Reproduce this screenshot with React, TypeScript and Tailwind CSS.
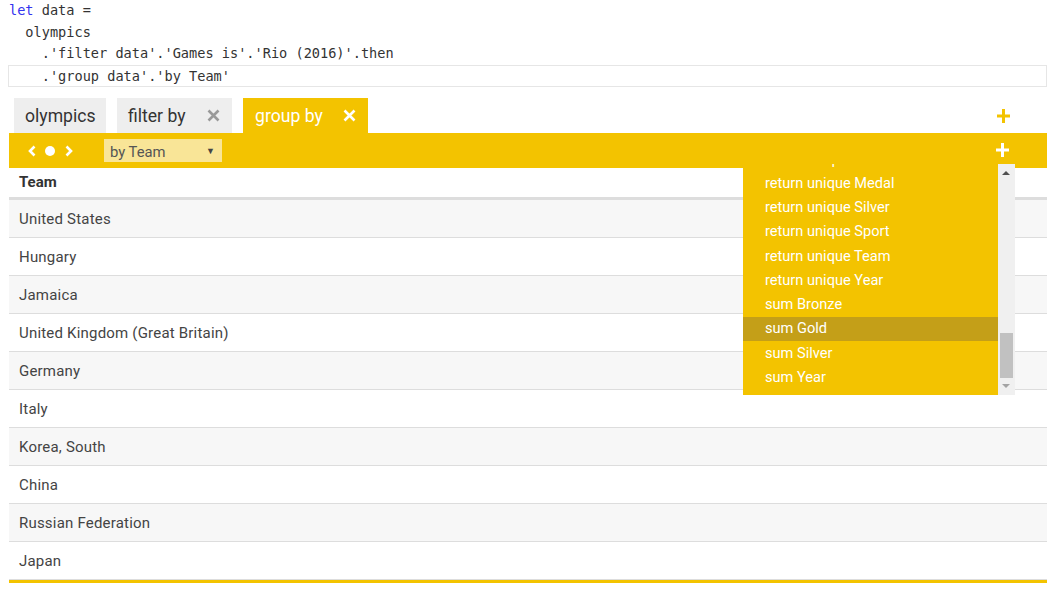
import React from "react";

const rows = [
  "United States",
  "Hungary",
  "Jamaica",
  "United Kingdom (Great Britain)",
  "Germany",
  "Italy",
  "Korea, South",
  "China",
  "Russian Federation",
  "Japan",
];

const items = [
  "return unique Gold",
  "return unique Medal",
  "return unique Silver",
  "return unique Sport",
  "return unique Team",
  "return unique Year",
  "sum Bronze",
  "sum Gold",
  "sum Silver",
  "sum Year",
];

function Plus({ color }: { color: string }) {
  return (
    <svg width="13" height="14" viewBox="0 0 13 14">
      <rect x="5" y="0" width="3" height="14" fill={color} />
      <rect x="0" y="5.5" width="13" height="3" fill={color} />
    </svg>
  );
}

function Cross({ color }: { color: string }) {
  return (
    <svg width="13" height="13" viewBox="0 0 13 13">
      <path d="M1.5 1.5 L11.5 11.5 M11.5 1.5 L1.5 11.5" stroke={color} strokeWidth="2.6" />
    </svg>
  );
}

export default function App() {
  return (
    <div className="relative w-[1047px] h-[607px] bg-white overflow-hidden font-['Roboto',sans-serif]">
      {/* code */}
      <div className="pl-[9px] font-['DejaVu_Sans_Mono',monospace] text-[13.6px] text-[#333] leading-[21.6px]">
        <div className="h-[21.6px] whitespace-pre">
          <span className="text-[#3333ee]">let</span> data =
        </div>
        <div className="h-[21.6px] whitespace-pre">{"  olympics"}</div>
        <div className="h-[21.6px] whitespace-pre">{"    .'filter data'.'Games is'.'Rio (2016)'.then"}</div>
        <div className="h-[22px] whitespace-pre border border-[#e6e6e6] ml-[-1px] leading-[20px]">{"    .'group data'.'by Team'"}</div>
      </div>

      {/* tabs */}
      <div className="mt-[11px] flex items-stretch h-[35px] pl-[14px] pr-[37px]">
        <div className="bg-[#eeeeee] w-[92px] pl-[11px] pt-[1px] flex items-center text-[17.6px] text-[#333]">olympics</div>
        <div className="ml-[11px] bg-[#eeeeee] w-[115px] pl-[11px] pr-[12px] pt-[1px] flex items-center justify-between text-[17.6px] text-[#333]">
          <span>filter by</span>
          <Cross color="#999999" />
        </div>
        <div className="ml-[11px] bg-[#f3c300] w-[125px] pl-[12px] pr-[12px] pt-[1px] flex items-center justify-between text-[17.6px] text-white">
          <span>group by</span>
          <Cross color="#ffffff" />
        </div>
        <div className="flex-1" />
        <div className="flex items-center pt-[1px]">
          <Plus color="#f3c300" />
        </div>
      </div>

      {/* yellow bar */}
      <div className="ml-[9px] h-[35px] bg-[#f3c300] flex items-center pr-[38px]">
        <div className="flex items-center ml-[19px] pt-[2px]">
          <svg width="8" height="12" viewBox="0 0 8 12">
            <path d="M6.5 1.5 L2 6 L6.5 10.5" stroke="white" strokeWidth="2.6" fill="none" />
          </svg>
          <div className="ml-[9px] w-[10px] h-[10px] rounded-full bg-white" />
          <svg className="ml-[10px]" width="8" height="12" viewBox="0 0 8 12">
            <path d="M1.5 1.5 L6 6 L1.5 10.5" stroke="white" strokeWidth="2.6" fill="none" />
          </svg>
        </div>
        <div className="ml-[31px] mt-[1px] w-[118px] h-[23px] bg-[#f9e597] flex items-center justify-between pl-[6px] pr-[7px] pt-[2px] text-[14.8px] text-[#555]">
          <span>by Team</span>
          <span className="text-[9px] text-[#444]">▼</span>
        </div>
        <div className="flex-1" />
        <Plus color="#ffffff" />
      </div>

      {/* table */}
      <div className="ml-[9px]">
        <div className="h-[32px] flex items-center pl-[10px] text-[15px] font-bold text-[#333] border-b-[3px] border-[#dddddd]">
          Team
        </div>
        {rows.map((r, i) => (
          <div
            key={r}
            className={`h-[38px] flex items-center pl-[10px] pt-[2px] text-[15px] tracking-[0.2px] text-[#444] border-b border-[#dddddd] ${i % 2 === 0 ? "bg-[#f7f7f7]" : "bg-white"}`}
          >
            {r}
          </div>
        ))}
        <div className="h-[3px] bg-[#f3c300]" />
      </div>

      {/* dropdown */}
      <div className="absolute left-[743px] top-[164px] w-[272px] h-[231px] flex">
        <div className="w-[255px] h-full bg-[#f3c300] overflow-hidden">
          <div className="mt-[-17px]">
            {items.map((it) => (
              <div
                key={it}
                className={`h-[24.25px] flex items-center pl-[22px] pt-[1px] text-[14.6px] text-white ${it === "sum Gold" ? "bg-[#c49f18]" : ""}`}
              >
                {it}
              </div>
            ))}
          </div>
        </div>
        <div className="w-[17px] h-full bg-[#f0f0f0] relative">
          <div className="absolute left-[4px] top-[7px] w-0 h-0 border-l-[4px] border-r-[4px] border-b-[4px] border-l-transparent border-r-transparent border-b-[#505050]" />
          <div className="absolute left-[2px] top-[169px] w-[13px] h-[45px] bg-[#c1c1c1]" />
          <div className="absolute left-[4px] top-[220px] w-0 h-0 border-l-[4px] border-r-[4px] border-t-[4px] border-l-transparent border-r-transparent border-t-[#a3a3a3]" />
        </div>
      </div>
    </div>
  );
}
